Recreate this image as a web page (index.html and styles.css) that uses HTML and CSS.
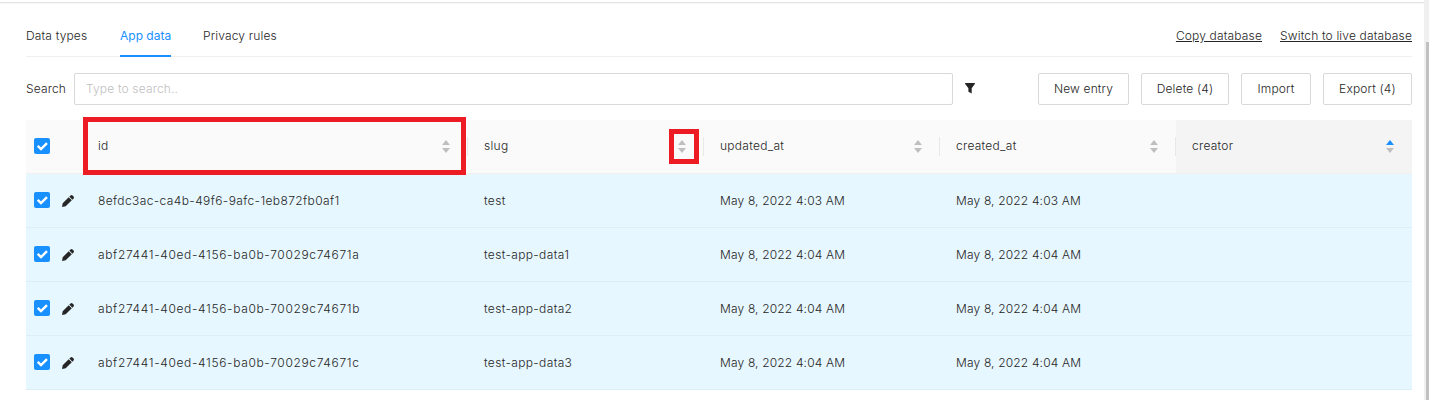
FILE: index.html
```html
<!DOCTYPE html>
<html lang="en">
<head>
<meta charset="utf-8">
<title>App data</title>
<link rel="stylesheet" href="styles.css">
</head>
<body>
<svg class="defs" aria-hidden="true">
  <symbol id="check" viewBox="0 0 16 16"><path d="M3.7 7.8 7 11.1 13 5.1" fill="none" stroke="#fff" stroke-width="2.4"/></symbol>
  <symbol id="pencil" viewBox="0 0 12 12"><path d="M0 12 .7 8.3 6.7 2.2 9.8 5.3 3.7 11.3ZM7.3 1.6 8.6.4Q9.6-.3 10.5.4L11.6 1.5Q12.3 2.4 11.6 3.4L10.4 4.7Z"/></symbol>
  <symbol id="up" viewBox="0 0 8 5"><path d="M4 0 8 5H0Z"/></symbol>
  <symbol id="down" viewBox="0 0 8 5"><path d="M4 5 8 0H0Z"/></symbol>
</svg>
<div class="page">
  <main class="content">
    <nav class="tabs">
      <a class="tab">Data types</a>
      <a class="tab active">App data</a>
      <a class="tab">Privacy rules</a>
      <div class="links"><a class="link">Copy database</a><a class="link">Switch to live database</a></div>
    </nav>
    <div class="toolbar">
      <label class="search-label" for="q">Search</label>
      <input id="q" class="search" placeholder="Type to search..">
      <svg class="filter" viewBox="0 0 10 11"><path d="M.5 0H9.5Q10.3.3 9.8 1L6.7 5.2V10.6L3.4 8.7V5.2L.2 1Q-.3.3.5 0Z"/></svg>
      <div class="buttons">
        <button class="btn new">New entry</button>
        <button class="btn delete">Delete (4)</button>
        <button class="btn import">Import</button>
        <button class="btn export">Export (4)</button>
      </div>
    </div>
    <div class="table">
      <div class="row head">
        <div class="tools"><svg class="box"><use href="#check"/></svg></div>
        <div class="cell"><span>id</span><span class="sorter"><svg><use href="#up"/></svg><svg><use href="#down"/></svg></span><i class="mark mark-wide"></i></div>
        <div class="cell"><span>slug</span><span class="sorter"><svg><use href="#up"/></svg><svg><use href="#down"/></svg><i class="mark mark-small"></i></span></div>
        <div class="cell"><span>updated_at</span><span class="sorter"><svg><use href="#up"/></svg><svg><use href="#down"/></svg></span></div>
        <div class="cell"><span>created_at</span><span class="sorter"><svg><use href="#up"/></svg><svg><use href="#down"/></svg></span></div>
        <div class="cell sorted"><span>creator</span><span class="sorter"><svg class="on"><use href="#up"/></svg><svg><use href="#down"/></svg></span></div>
      </div>
      <div class="row">
        <div class="tools"><svg class="box"><use href="#check"/></svg><svg class="pencil"><use href="#pencil"/></svg></div>
        <div class="cell id">8efdc3ac-ca4b-49f6-9afc-1eb872fb0af1</div><div class="cell slug">test</div><div class="cell">May 8, 2022 4:03 AM</div><div class="cell">May 8, 2022 4:03 AM</div><div class="cell"></div>
      </div>
      <div class="row">
        <div class="tools"><svg class="box"><use href="#check"/></svg><svg class="pencil"><use href="#pencil"/></svg></div>
        <div class="cell id wide">abf27441-40ed-4156-ba0b-70029c74671a</div><div class="cell slug">test-app-data1</div><div class="cell">May 8, 2022 4:04 AM</div><div class="cell">May 8, 2022 4:04 AM</div><div class="cell"></div>
      </div>
      <div class="row">
        <div class="tools"><svg class="box"><use href="#check"/></svg><svg class="pencil"><use href="#pencil"/></svg></div>
        <div class="cell id wide">abf27441-40ed-4156-ba0b-70029c74671b</div><div class="cell slug">test-app-data2</div><div class="cell">May 8, 2022 4:04 AM</div><div class="cell">May 8, 2022 4:04 AM</div><div class="cell"></div>
      </div>
      <div class="row">
        <div class="tools"><svg class="box"><use href="#check"/></svg><svg class="pencil"><use href="#pencil"/></svg></div>
        <div class="cell id wide">abf27441-40ed-4156-ba0b-70029c74671c</div><div class="cell slug">test-app-data3</div><div class="cell">May 8, 2022 4:04 AM</div><div class="cell">May 8, 2022 4:04 AM</div><div class="cell"></div>
      </div>
    </div>
  </main>
  <div class="scrollbar"><div class="thumb"></div></div>
</div>
</body>
</html>
```
FILE: styles.css
```css
* { box-sizing: border-box; }
body { margin: 0; overflow: hidden; background: #fff; color: #262626; font: 300 12px/20px Inter, sans-serif; letter-spacing: .16px; }
.defs { position: absolute; width: 0; height: 0; }
.page { display: flex; height: 400px; }
.content { width: 1424px; padding: 2px 12px 0 26px; background: linear-gradient(#fff 2px, #e6e6e6 2px, #e6e6e6 3px, #f5f5f5 3px, #f5f5f5 4px, #fff 4px); }
.scrollbar { width: 5px; padding: 42px 0 0 2px; background: #f0f0f0; }
.thumb { height: 358px; background: #c1c1c1; }
.tabs { display: flex; gap: 32px; height: 55px; padding-top: 24px; border-bottom: 1px solid #f0f0f0; }
.tab { width: 62px; height: 31px; white-space: nowrap; }
.tab.active { width: 51px; color: #1890ff; font-weight: 400; letter-spacing: 0; border-bottom: 2px solid #1890ff; }
.links { display: flex; gap: 18px; margin-left: auto; }
.link { text-decoration: underline; white-space: nowrap; }
.toolbar { display: flex; align-items: center; height: 32px; margin: 16px 0 15px; }
.search-label { width: 48px; }
.search { width: 879px; height: 32px; padding: 0 11px 2px; border: 1px solid #d9d9d9; border-radius: 2px; font: inherit; letter-spacing: inherit; }
.search::placeholder { color: #bfbfbf; opacity: 1; }
.filter { width: 10px; height: 11px; margin: -1px 0 0 12px; fill: #262626; }
.buttons { display: flex; gap: 12px; margin-left: auto; }
.btn { height: 32px; padding: 0; border: 1px solid #d9d9d9; border-radius: 2px; background: #fff; color: inherit; font: inherit; letter-spacing: inherit; }
.new { width: 91px; }
.delete { width: 88px; }
.import { width: 70px; }
.export { width: 89px; }
.row { display: grid; grid-template-columns: 56px 386px repeat(4, 236px); height: 54px; border-bottom: 1px solid #dceef6; background: #e6f7ff; }
.head { background: #fafafa; border-color: #f0f0f0; border-radius: 2px 2px 0 0; letter-spacing: .28px; }
.tools { display: flex; align-items: center; gap: 12px; padding: 0 0 1px 8px; }
.box { width: 16px; height: 16px; border-radius: 2px; background: #1890ff; }
.pencil { width: 12px; height: 12px; fill: #262626; margin-top: 2px; }
.cell { display: flex; align-items: center; padding-left: 16px; white-space: nowrap; }
.id { letter-spacing: .39px; }
.id.wide { letter-spacing: .65px; }
.slug { letter-spacing: .36px; }
.head .cell { position: relative; justify-content: space-between; padding: 0 18px 1px 16px; background: linear-gradient(#e8e8e8, #e8e8e8) right 17px / 1px 19px no-repeat; }
.head .cell.sorted { background: #f4f4f4; }
.sorter { position: relative; display: flex; flex-direction: column; gap: 3px; }
.sorter svg { display: block; width: 8px; height: 5px; fill: #bfbfbf; }
.sorter .on { fill: #1890ff; }
.mark { position: absolute; border: 5px solid #ed1c24; }
.mark-wide { left: 1px; top: -3px; width: 383px; height: 58px; }
.mark-small { left: -9px; top: -11px; width: 30px; height: 35px; }
```
